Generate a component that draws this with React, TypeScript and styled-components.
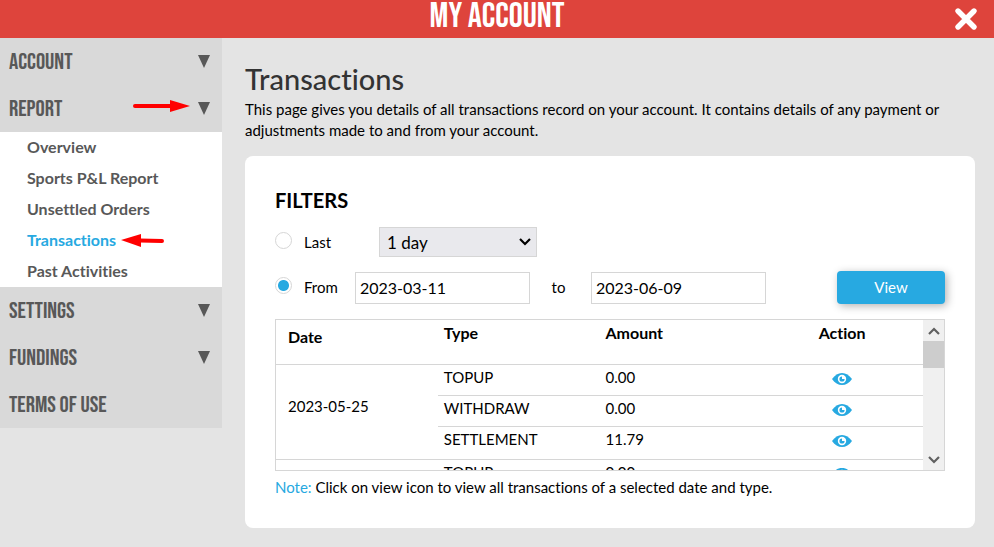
import React, { useEffect, useRef, useState } from "react";
import styled, { createGlobalStyle } from "styled-components";

const blue = "#27a9e1";
const line = "#d6d6d6";

const GlobalStyle = createGlobalStyle`
  * { box-sizing: border-box; }
  body {
    margin: 0;
    background: #e4e4e4;
    color: #000;
    font-family: Lato, "Open Sans", sans-serif;
    font-size: 15px;
    font-variant-ligatures: none;
    line-height: 21px;
  }
  button, input, select { font: inherit; color: inherit; }
`;

const Header = styled.header`
  display: grid;
  grid-template-columns: 1fr auto 1fr;
  align-items: center;
  height: 38px;
  background: #de443c;
  color: #fff;
`;

const HeaderTitle = styled.h1`
  grid-column: 2;
  margin: 0;
  padding-bottom: 4px;
  font: normal 35px/34px "Bebas Neue", Roboto, sans-serif;
`;

const CloseButton = styled.button`
  display: flex;
  justify-self: end;
  margin-right: 16px;
  padding: 0;
  border: 0;
  background: none;
  cursor: pointer;
`;

const Layout = styled.div`
  display: flex;
  align-items: flex-start;
`;

const Sidebar = styled.nav`
  flex: 0 0 222px;
  background: #d9d9d9;
  color: #585858;
`;

const MenuHeading = styled.button`
  display: flex;
  align-items: center;
  gap: 8px;
  width: 100%;
  height: 47px;
  padding: 0 12px 0 9px;
  border: 0;
  background: none;
  text-align: left;
  cursor: pointer;
`;

const MenuLabel = styled.span`
  flex: 1;
  font: normal 23px/24px "Bebas Neue", Roboto, sans-serif;
`;

const Submenu = styled.ul`
  margin: 0;
  padding: 0;
  list-style: none;
  background: #fff;
`;

const SubmenuItem = styled.li`
  display: flex;
  align-items: center;
  gap: 5px;
  height: 31px;
  padding-left: 27px;
`;

const SubmenuLink = styled.a<{ $active?: boolean }>`
  padding-bottom: 3px;
  color: ${(p) => (p.$active ? blue : "#585858")};
  font-size: 16px;
  font-weight: bold;
  text-decoration: none;
`;

const Main = styled.main`
  flex: 1;
  min-width: 0;
  padding: 23px 19px 19px 23px;
`;

const PageTitle = styled.h2`
  margin: 0;
  color: #333;
  font-size: 29px;
  font-weight: 500;
  line-height: 36px;
`;

const Intro = styled.p`
  margin: 2px 0 15px;
`;

const Card = styled.section`
  padding: 30px 30px 30px;
  border-radius: 8px;
  background: #fff;
`;

const FilterTitle = styled.h3`
  margin: 0 0 12px;
  font-size: 20px;
  line-height: 29px;
`;

const FilterForm = styled.form`
  display: flex;
  flex-direction: column;
  gap: 14px;
  margin-bottom: 15px;
`;

const FilterRow = styled.div`
  display: flex;
  align-items: center;
`;

const RadioLabel = styled.label<{ $width: number }>`
  display: flex;
  align-items: center;
  gap: 12px;
  width: ${(p) => p.$width}px;
`;

const Radio = styled.input`
  appearance: none;
  width: 17px;
  height: 17px;
  margin: 0 0 4px;
  border: 1px solid ${line};
  border-radius: 50%;
  background: #fff;
  &:checked {
    background: radial-gradient(circle, ${blue} 5px, #fff 6px);
  }
`;

const SelectWrap = styled.div`
  display: grid;
  align-items: center;
  width: 158px;
  > * { grid-area: 1 / 1; }
  > svg { justify-self: end; margin-right: 6px; pointer-events: none; }
`;

const Select = styled.select`
  appearance: none;
  width: 100%;
  height: 30px;
  padding: 0 7px;
  border: 1px solid ${line};
  border-radius: 0;
  background: #e9e9ed;
  font-size: 17px;
`;

const DateInput = styled.input`
  width: 175px;
  height: 32px;
  padding: 0 4px;
  border: 1px solid ${line};
  background: #fff;
  font-size: 16px;
`;

const ToLabel = styled.label`
  width: 61px;
  padding-right: 4px;
  text-align: center;
`;

const ViewButton = styled.button`
  width: 108px;
  height: 33px;
  margin-left: auto;
  border: 0;
  border-radius: 4px;
  background: ${blue};
  color: #fff;
  box-shadow: 2px 2px 8px rgba(0, 0, 0, 0.3);
  cursor: pointer;
`;

const TableFrame = styled.div`
  display: flex;
  height: 152px;
  border: 1px solid ${line};
`;

const TableViewport = styled.div`
  flex: 1;
  min-width: 0;
  overflow-y: scroll;
  scrollbar-width: none;
`;

const Table = styled.table`
  width: 100%;
  table-layout: fixed;
  border-collapse: separate;
  border-spacing: 0;
`;

const HeadCell = styled.th<{ $date?: boolean; $center?: boolean }>`
  height: 45px;
  padding: ${(p) => (p.$date ? "6px 12px 0" : "2px 6px 0")};
  border-bottom: 1px solid ${line};
  font-size: 16px;
  text-align: ${(p) => (p.$center ? "center" : "left")};
  vertical-align: top;
`;

const DateCell = styled.td`
  padding: 0 12px 12px;
  border-bottom: 1px solid ${line};
`;

const Cell = styled.td<{ $last?: boolean; $center?: boolean }>`
  height: ${(p) => (p.$last ? 33 : 31)}px;
  padding: 2px 6px 0;
  border-bottom: 1px solid ${line};
  text-align: ${(p) => (p.$center ? "center" : "left")};
  vertical-align: top;
`;

const IconButton = styled.button`
  display: inline-flex;
  padding: 6px 0 0;
  border: 0;
  background: none;
  cursor: pointer;
`;

const Scrollbar = styled.div`
  display: flex;
  flex-direction: column;
  flex: 0 0 21px;
  background: #f0f0f0;
`;

const ScrollButton = styled.button`
  display: flex;
  align-items: center;
  justify-content: center;
  height: 21px;
  padding: 0;
  border: 0;
  background: none;
`;

const ScrollTrack = styled.div`
  flex: 1;
`;

const ScrollThumb = styled.div`
  height: 27px;
  background: #cdcdcd;
`;

const Note = styled.p`
  margin: 6px 0 0;
`;

const NoteLabel = styled.span`
  color: ${blue};
`;

const CloseIcon = () => (
  <svg width="24" height="24" viewBox="0 0 24 24" aria-hidden="true">
    <path d="M4 4 20 20M20 4 4 20" stroke="#fff" strokeWidth="5.4" strokeLinecap="round" />
  </svg>
);

const Triangle = () => (
  <svg width="12" height="13" viewBox="0 0 12 13" aria-hidden="true">
    <path d="M0 0H12L6 13Z" fill="#585858" />
  </svg>
);

const RightArrow = () => (
  <svg width="57" height="18" viewBox="0 0 57 18" aria-hidden="true">
    <path d="M2 6H38" stroke="#f00" strokeWidth="4" strokeLinecap="round" />
    <path d="M37 0 57 6 37 12Z" fill="#f00" />
  </svg>
);

const LeftArrow = () => (
  <svg width="43" height="13" viewBox="0 0 43 13" aria-hidden="true">
    <path d="M19 6.5 41 7" stroke="#f00" strokeWidth="4" strokeLinecap="round" />
    <path d="M0 6 20 0V13Z" fill="#f00" />
  </svg>
);

const Chevron = ({ up, color = "#606060" }: { up?: boolean; color?: string }) => (
  <svg width="12" height="8" viewBox="0 0 12 8" aria-hidden="true">
    <path d={up ? "M1 7 6 2 11 7" : "M1 1 6 6 11 1"} fill="none" stroke={color} strokeWidth="2.2" />
  </svg>
);

const EyeIcon = () => (
  <svg width="20" height="12" viewBox="0 0 20 12" aria-hidden="true">
    <path d="M0 6C3 2 6 0 10 0S17 2 20 6C17 10 14 12 10 12S3 10 0 6Z" fill={blue} />
    <circle cx="10" cy="6" r="4.2" fill="#fff" />
    <path d="M10 3.4V6H12.6A2.6 2.6 0 1 1 10 3.4Z" fill={blue} />
  </svg>
);

const reportLinks = ["Overview", "Sports P&L Report", "Unsettled Orders", "Transactions", "Past Activities"];

const groups = [
  { date: "2023-05-25", rows: [["TOPUP", "0.00"], ["WITHDRAW", "0.00"], ["SETTLEMENT", "11.79"]] },
  { date: "", rows: [["TOPUP", "0.00"]] },
];

function MenuItem({ label, plain, marked }: { label: string; plain?: boolean; marked?: boolean }) {
  return (
    <MenuHeading type="button">
      <MenuLabel>{label}</MenuLabel>
      {marked && <RightArrow />}
      {!plain && <Triangle />}
    </MenuHeading>
  );
}

function TransactionsTable() {
  const viewport = useRef<HTMLDivElement>(null);
  const track = useRef<HTMLDivElement>(null);
  const [offset, setOffset] = useState(0);

  const sync = () => {
    const v = viewport.current;
    const t = track.current;
    if (!v || !t) return;
    const range = v.scrollHeight - v.clientHeight;
    setOffset(range > 0 ? (v.scrollTop / range) * (t.clientHeight - 27) : 0);
  };
  useEffect(sync, []);
  const scroll = (by: number) => viewport.current?.scrollBy({ top: by });

  return (
    <TableFrame>
      <TableViewport ref={viewport} onScroll={sync}>
        <Table>
          <thead>
            <tr>
              <HeadCell scope="col" $date>Date</HeadCell>
              <HeadCell scope="col">Type</HeadCell>
              <HeadCell scope="col">Amount</HeadCell>
              <HeadCell scope="col" $center>Action</HeadCell>
            </tr>
          </thead>
          {groups.map((group) => (
            <tbody key={group.date}>
              {group.rows.map(([type, amount], i) => {
                const last = i === group.rows.length - 1;
                return (
                  <tr key={type}>
                    {i === 0 && <DateCell rowSpan={group.rows.length}>{group.date}</DateCell>}
                    <Cell $last={last}>{type}</Cell>
                    <Cell $last={last}>{amount}</Cell>
                    <Cell $last={last} $center>
                      <IconButton type="button" aria-label={`View ${type}`}><EyeIcon /></IconButton>
                    </Cell>
                  </tr>
                );
              })}
            </tbody>
          ))}
        </Table>
      </TableViewport>
      <Scrollbar>
        <ScrollButton type="button" aria-label="Scroll up" onClick={() => scroll(-31)}><Chevron up /></ScrollButton>
        <ScrollTrack ref={track}>
          <ScrollThumb style={{ transform: `translateY(${offset}px)` }} />
        </ScrollTrack>
        <ScrollButton type="button" aria-label="Scroll down" onClick={() => scroll(31)}><Chevron /></ScrollButton>
      </Scrollbar>
    </TableFrame>
  );
}

export default function App() {
  return (
    <>
      <GlobalStyle />
      <Header>
        <HeaderTitle>MY ACCOUNT</HeaderTitle>
        <CloseButton type="button" aria-label="Close"><CloseIcon /></CloseButton>
      </Header>
      <Layout>
        <Sidebar>
          <MenuItem label="ACCOUNT" />
          <MenuItem label="REPORT" marked />
          <Submenu>
            {reportLinks.map((name) => (
              <SubmenuItem key={name}>
                <SubmenuLink href="#" $active={name === "Transactions"}>{name}</SubmenuLink>
                {name === "Transactions" && <LeftArrow />}
              </SubmenuItem>
            ))}
          </Submenu>
          <MenuItem label="SETTINGS" />
          <MenuItem label="FUNDINGS" />
          <MenuItem label="TERMS OF USE" plain />
        </Sidebar>
        <Main>
          <PageTitle>Transactions</PageTitle>
          <Intro>
            This page gives you details of all transactions record on your account. It contains details of any
            payment or adjustments made to and from your account.
          </Intro>
          <Card>
            <FilterTitle>FILTERS</FilterTitle>
            <FilterForm onSubmit={(e) => e.preventDefault()}>
              <FilterRow>
                <RadioLabel $width={104}><Radio type="radio" name="range" value="last" />Last</RadioLabel>
                <SelectWrap>
                  <Select aria-label="Last period" defaultValue="1">
                    <option value="1">1 day</option>
                    <option value="7">7 days</option>
                  </Select>
                  <Chevron color="#000" />
                </SelectWrap>
              </FilterRow>
              <FilterRow>
                <RadioLabel $width={80}><Radio type="radio" name="range" value="from" defaultChecked />From</RadioLabel>
                <DateInput aria-label="From date" defaultValue="2023-03-11" />
                <ToLabel htmlFor="to-date">to</ToLabel>
                <DateInput id="to-date" defaultValue="2023-06-09" />
                <ViewButton type="submit">View</ViewButton>
              </FilterRow>
            </FilterForm>
            <TransactionsTable />
            <Note><NoteLabel>Note:</NoteLabel> Click on view icon to view all transactions of a selected date and type.</Note>
          </Card>
        </Main>
      </Layout>
    </>
  );
}
